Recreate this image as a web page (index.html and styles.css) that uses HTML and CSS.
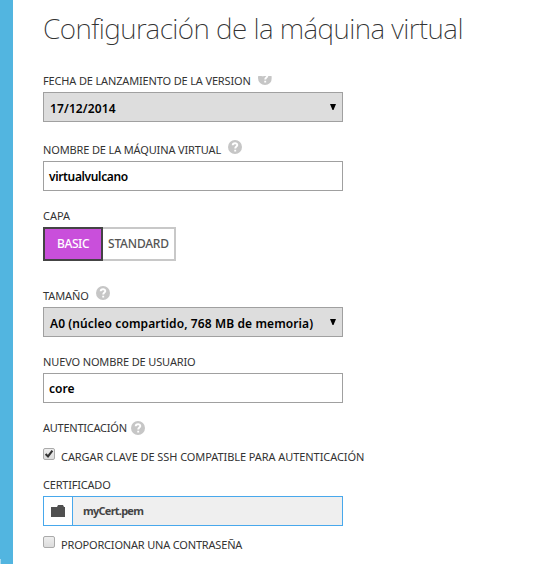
FILE: index.html
```html
<!DOCTYPE html>
<html lang="es">
<head>
<meta charset="utf-8">
<title>Configuración de la máquina virtual</title>
<link rel="stylesheet" href="styles.css">
</head>
<body>
<div class="rail"><span class="rail-mark"></span></div>
<main class="form">
  <h1 class="title"><span>Configuración de la máquina virtual</span></h1>

  <section class="group group-release">
    <div class="label"><span class="t-release">FECHA DE LANZAMIENTO DE LA VERSION</span>
      <svg class="help help-cut" viewBox="0 0 14 14"><circle cx="7" cy="7" r="7"/><path d="M4.7 5.2C4.7 2.5 9.5 2.6 9.3 5.1C9.2 6.6 7.2 6.6 7.2 8.6M7.2 9.7V11.4"/></svg></div>
    <div class="field select"><span class="t-date">17/12/2014</span><svg class="arrow" viewBox="0 0 6 6"><path d="M0 0H6L3.5 6H2.5Z"/></svg></div>
  </section>

  <section class="group group-name">
    <div class="label"><span class="t-name">NOMBRE DE LA MÁQUINA VIRTUAL</span>
      <svg class="help" viewBox="0 0 14 14"><circle cx="7" cy="7" r="7"/><path d="M4.7 5.2C4.7 2.5 9.5 2.6 9.3 5.1C9.2 6.6 7.2 6.6 7.2 8.6M7.2 9.7V11.4"/></svg></div>
    <div class="field"><span class="t-vulcano">virtualvulcano</span></div>
  </section>

  <section class="group group-tier">
    <div class="label"><span class="t-tier">CAPA</span></div>
    <div class="segments">
      <div class="segment active"><span class="t-basic">BASIC</span></div>
      <div class="segment"><span class="t-standard">STANDARD</span></div>
    </div>
  </section>

  <section class="group group-size">
    <div class="label"><span class="t-size">TAMAÑO</span>
      <svg class="help" viewBox="0 0 14 14"><circle cx="7" cy="7" r="7"/><path d="M4.7 5.2C4.7 2.5 9.5 2.6 9.3 5.1C9.2 6.6 7.2 6.6 7.2 8.6M7.2 9.7V11.4"/></svg></div>
    <div class="field select"><span class="t-a0">A0 (núcleo compartido, 768 MB de memoria)</span><svg class="arrow" viewBox="0 0 6 6"><path d="M0 0H6L3.5 6H2.5Z"/></svg></div>
  </section>

  <section class="group group-user">
    <div class="label"><span class="t-user">NUEVO NOMBRE DE USUARIO</span></div>
    <div class="field"><span class="t-core">core</span></div>
  </section>

  <section class="group group-auth">
    <div class="label"><span class="t-auth">AUTENTICACIÓN</span>
      <svg class="help help-near" viewBox="0 0 14 14"><circle cx="7" cy="7" r="7"/><path d="M4.7 5.2C4.7 2.5 9.5 2.6 9.3 5.1C9.2 6.6 7.2 6.6 7.2 8.6M7.2 9.7V11.4"/></svg></div>
  </section>

  <div class="check check-ssh">
    <span class="box"><svg viewBox="0 0 10 10"><path d="M1.6 5L4 7.4L8.4 1.6"/></svg></span>
    <span class="t-ssh">CARGAR CLAVE DE SSH COMPATIBLE PARA AUTENTICACIÓN</span>
  </div>

  <section class="group group-cert">
    <div class="label"><span class="t-cert">CERTIFICADO</span></div>
    <div class="file">
      <div class="browse"><svg class="folder" viewBox="0 0 14 12"><path d="M0 2H6L7 0H12L13 2H14V12H0Z"/></svg></div>
      <span class="t-pem">myCert.pem</span>
    </div>
  </section>

  <div class="check check-pass">
    <span class="box"></span>
    <span class="t-pass">PROPORCIONAR UNA CONTRASEÑA</span>
  </div>
</main>
</body>
</html>
```
FILE: styles.css
```css
* { box-sizing: border-box; }
body {
  margin: 0;
  display: flex;
  height: 564px;
  overflow: hidden;
  background: #fff;
  color: #333;
  font-family: "Noto Sans", "Open Sans", sans-serif;
  font-size: 11px;
  white-space: nowrap;
}
.rail {
  width: 13px;
  flex: none;
  background: #52b5e0;
  display: flex;
  align-items: flex-end;
}
.rail-mark { width: 1px; height: 5px; background: #a8d9ef; }
.form { padding: 8px 0 0 30px; }
.title {
  margin: 0;
  height: 65px;
  font: 200 28px/40px "Noto Sans", "Open Sans", sans-serif;
  letter-spacing: -0.55px;
  color: #333;
}
.label { display: flex; height: 19px; line-height: 16px; }
.help { width: 14px; height: 14px; margin: -2px 0 0 7px; flex: none; }
.help circle { fill: #c6c6c6; }
.help path { fill: none; stroke: #fff; stroke-width: 1.9; }
.help-cut { margin-top: -2px; clip-path: inset(5px 0 0 0); }
.help-near { margin: 1px 0 0 4px; }
.field {
  width: 300px;
  height: 30px;
  border: 1px solid #a0a0a0;
  padding: 0 6px 0 5px;
  display: flex;
  justify-content: space-between;
  font-size: 12px;
  font-weight: 600;
  line-height: 29px;
  color: #000;
}
.select { background: #ddd; padding-left: 6px; line-height: 31px; }
.arrow { width: 6px; height: 6px; margin-top: 11px; }
.group-release { height: 69px; }
.group-name { height: 66px; }
.group-tier { height: 80px; }
.group-size { height: 66px; }
.group-user { height: 66px; }
.group-auth { height: 29px; }
.segments { display: flex; height: 34px; line-height: 30px; }
.segment {
  width: 73px;
  border: 2px solid #c8c8c8;
  border-left: 0;
  padding-left: 5px;
  font-size: 12px;
  font-weight: 500;
  color: #555;
}
.segment.active {
  width: 60px;
  border: 2px solid #444;
  background: #c94fdb;
  color: #fff;
  padding-left: 12px;
}
.check { display: flex; line-height: 16px; height: 28px; }
.box {
  width: 12px;
  height: 12px;
  margin: -1px 6px 0 0;
  border: 1px solid #aaa;
  border-radius: 2px;
  background: linear-gradient(#eee, #dcdcdc);
  display: flex;
}
.box svg { width: 10px; height: 10px; }
.box path { fill: none; stroke: #333; stroke-width: 2.1; }
.group-cert { height: 60px; }
.file {
  display: flex;
  width: 300px;
  height: 30px;
  border: 1px solid #48a8ec;
  background: #efefef;
  line-height: 28px;
  font-weight: 700;
  color: #444;
}
.browse {
  width: 29px;
  margin-right: 10px;
  border-right: 1px solid #48a8ec;
  background: #fff;
  padding: 8px 0 0 7px;
  line-height: 0;
}
.folder { width: 14px; height: 12px; fill: #505050; }

/* Tracking per text run */
.t-release { letter-spacing: -0.15px; }
.t-name { letter-spacing: -0.14px; }
.t-size { letter-spacing: -0.1px; }
.t-user { letter-spacing: -0.13px; }
.t-auth { letter-spacing: -0.24px; }
.t-ssh { letter-spacing: -0.07px; }
.t-cert { letter-spacing: -0.2px; }
.t-pass { letter-spacing: -0.18px; }
.t-date { letter-spacing: 0.12px; }
.t-vulcano { letter-spacing: -0.36px; }
.t-a0 { letter-spacing: 0.1px; }
.t-basic { letter-spacing: -0.4px; }
.t-standard { letter-spacing: -0.2px; }
.t-pem { font-weight: 700; letter-spacing: -0.75px; }
```
